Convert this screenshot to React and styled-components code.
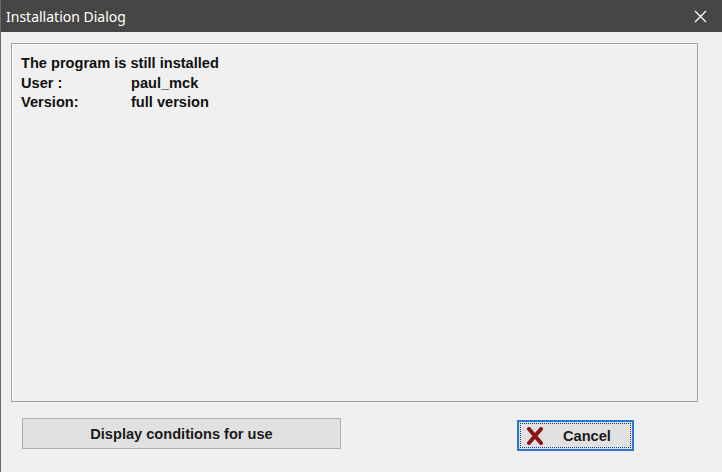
import React from 'react';
import styled, { createGlobalStyle } from 'styled-components';

const GlobalStyle = createGlobalStyle`
  html, body {
    margin: 0;
    padding: 0;
    background: #f0f0f0;
  }
`;

const Window = styled.div`
  width: 722px;
  height: 472px;
  display: flex;
  flex-direction: column;
  background: #f0f0f0;
  border-left: 1px solid #6a6a6a;
  box-sizing: border-box;
  overflow: hidden;
`;

const TitleBar = styled.div`
  height: 32px;
  flex: none;
  display: flex;
  align-items: center;
  justify-content: space-between;
  background: #474644;
  color: #ffffff;
  font-family: 'Noto Sans', 'Open Sans', sans-serif;
  font-size: 14px;
  padding-left: 5px;
`;

const CloseButton = styled.div`
  width: 44px;
  height: 32px;
  display: flex;
  align-items: center;
  justify-content: center;
`;

const Body = styled.div`
  flex: 1;
  display: flex;
  flex-direction: column;
  padding: 11px 24px 0 10px;
`;

const Panel = styled.div`
  height: 359px;
  box-sizing: border-box;
  border: 1px solid #a0a0a0;
  box-shadow: inset 1px 1px 0 #ffffff;
  padding: 10px 9px;
  font-family: 'Liberation Sans', Arial, sans-serif;
  font-weight: bold;
  font-size: 14.6px;
  line-height: 19.5px;
  color: #111111;
`;

const Row = styled.div`
  display: flex;
`;

const Label = styled.span`
  width: 110px;
  flex: none;
`;

const Footer = styled.div`
  display: flex;
  align-items: flex-start;
  padding-top: 16px;
`;

const Button = styled.button`
  box-sizing: border-box;
  height: 31px;
  width: ${(p) => p.$width}px;
  margin-left: ${(p) => p.$left}px;
  margin-top: ${(p) => p.$top || 0}px;
  background: #e1e1e1;
  border: 1px solid #adadad;
  font-family: 'Liberation Sans', Arial, sans-serif;
  font-weight: bold;
  font-size: 14.6px;
  color: #1a1a1a;
  display: flex;
  align-items: center;
  justify-content: center;
  padding: 0;
`;

const CancelButton = styled(Button)`
  border: 2px solid #2a78d2;
  padding: 1px;
  justify-content: flex-start;
`;

const FocusRing = styled.span`
  flex: 1;
  align-self: stretch;
  display: flex;
  align-items: center;
  border: 1px dotted #1f3f7a;
  padding-left: 5px;
  gap: 19px;
`;

export default function App() {
  return (
    <>
      <GlobalStyle />
      <Window>
        <TitleBar>
          <span>Installation Dialog</span>
          <CloseButton>
            <svg width="13" height="13" viewBox="0 0 13 13">
              <path d="M1 1 L12 12 M12 1 L1 12" stroke="#ffffff" strokeWidth="1.3" />
            </svg>
          </CloseButton>
        </TitleBar>
        <Body>
          <Panel>
            <div>The program is still installed</div>
            <Row>
              <Label>User :</Label>
              <span>paul_mck</span>
            </Row>
            <Row>
              <Label>Version:</Label>
              <span>full version</span>
            </Row>
          </Panel>
          <Footer>
            <Button $width={319} $left={11}>Display conditions for use</Button>
            <CancelButton $width={117} $left={176} $top={2}>
              <FocusRing>
                <svg width="18" height="18" viewBox="0 0 18 18">
                  <path
                    d="M3 2 L15 16 M15 2 L3 16"
                    stroke="#8a1418"
                    strokeWidth="4"
                    strokeLinecap="round"
                  />
                </svg>
                <span>Cancel</span>
              </FocusRing>
            </CancelButton>
          </Footer>
        </Body>
      </Window>
    </>
  );
}
